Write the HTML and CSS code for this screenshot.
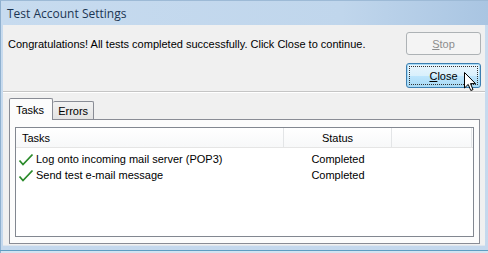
FILE: index.html
```html
<!DOCTYPE html>
<html>
<head>
<meta charset="utf-8">
<link rel="stylesheet" href="styles.css">
</head>
<body>
<div class="window">
  <div class="titlebar">Test Account Settings</div>
  <div class="client">
    <div class="top">
      <div class="message">Congratulations! All tests completed successfully. Click Close to continue.</div>
      <div class="buttons">
        <div class="btn disabled"><u>S</u>top</div>
        <div class="btn default"><span class="focus"><u>C</u>lose</span>
          <svg class="cursor" width="13" height="20" viewBox="0 0 13 20"><path d="M0.5 0.5 L0.5 16 L4.2 12.4 L6.8 18.5 L9 17.6 L6.5 11.6 L11.5 11.6 Z" fill="#fff" stroke="#000" stroke-width="1" stroke-linejoin="miter"/></svg>
        </div>
      </div>
    </div>
    <div class="separator"></div>
    <div class="tabs">
      <div class="tab active">Tasks</div>
      <div class="tab">Errors</div>
    </div>
    <div class="panel">
      <div class="list">
        <div class="header">
          <div class="col c1">Tasks</div>
          <div class="col c2">Status</div>
          <div class="col c3"></div>
        </div>
        <div class="row">
          <div class="cell c1"><svg class="check" width="16" height="13" viewBox="0 0 16 13"><path d="M1.5 7.5 L5 11.5 L14.5 1.5" fill="none" stroke="#2a8a2a" stroke-width="1.8"/></svg>Log onto incoming mail server (POP3)</div>
          <div class="cell c2">Completed</div>
        </div>
        <div class="row">
          <div class="cell c1"><svg class="check" width="16" height="13" viewBox="0 0 16 13"><path d="M1.5 7.5 L5 11.5 L14.5 1.5" fill="none" stroke="#2a8a2a" stroke-width="1.8"/></svg>Send test e-mail message</div>
          <div class="cell c2">Completed</div>
        </div>
      </div>
    </div>
  </div>
  <div class="frame-bottom"></div>
</div>
</body>
</html>
```

FILE: styles.css
```css
* { box-sizing: border-box; }
html, body { margin: 0; padding: 0; }
body {
  width: 488px;
  height: 253px;
  overflow: hidden;
  font-family: "Liberation Sans", Arial, sans-serif;
  font-size: 11px;
  color: #000;
}
.window {
  width: 488px;
  height: 253px;
  display: flex;
  flex-direction: column;
  background: linear-gradient(#c9dcef, #c4d8ed);
  border-left: 1px solid #8fb0cf;
  border-top: 1px solid #9dbad6;
}
.titlebar {
  height: 24px;
  padding-left: 6px;
  display: flex;
  align-items: center;
  font-family: "Open Sans", "Noto Sans", sans-serif;
  font-size: 12px;
  color: #1c3553;
  background: linear-gradient(90deg, #c7dbef 0%, #c0d6ec 70%, #a9c5e2 100%);
}
.client {
  margin: 0 3px 0 2px;
  height: 221px;
  background: #f0f0f0;
  border-bottom: 1px solid #dfe6ee;
  display: flex;
  flex-direction: column;
  padding: 0 4px 0 4px;
}
.frame-bottom {
  height: 7px;
  border-bottom: 2px solid #d4e3f1;
  position: relative;
}
.frame-bottom::after {
  content: "";
  position: absolute;
  left: -1px;
  right: 0;
  bottom: 0;
  height: 1px;
  background: #5f9dc2;
}
.top {
  display: flex;
  justify-content: space-between;
  height: 66px;
  padding-top: 7px;
}
.message {
  padding-top: 6px;
  padding-left: 1px;
}
.buttons {
  display: flex;
  flex-direction: column;
  gap: 8px;
  width: 75px;
}
.btn {
  position: relative;
  border-radius: 3px;
  display: flex;
  align-items: center;
  justify-content: center;
  font-size: 11px;
}
.btn.disabled {
  border: 1px solid #adb2b5;
  background: #f4f4f4;
  color: #8d8d8d;
  height: 23px;
}
.btn.default {
  height: 25px;
  border: 1px solid #3c7fb1;
  background: linear-gradient(#eaf6fd 0%, #d9f0fc 50%, #bee6fd 51%, #a7d9f5 100%);
  box-shadow: inset 0 0 0 1px #a9dbf6;
  padding: 2px;
}
.btn.default .focus {
  width: 100%;
  height: 100%;
  border: 1px dotted #333;
  display: flex;
  align-items: center;
  justify-content: center;
}
.cursor {
  position: absolute;
  left: 57px;
  top: 8px;
}
.separator {
  border-top: 1px solid #c5c5c5;
  border-bottom: 1px solid #ffffff;
  margin: 0 -4px;
}
.tabs {
  display: flex;
  align-items: flex-end;
  margin-top: 4px;
  padding-left: 2px;
  height: 22px;
  position: relative;
  z-index: 1;
}
.tab {
  height: 18px;
  padding: 0 5px;
  border: 1px solid #898c95;
  border-left: none;
  border-bottom: none;
  background: linear-gradient(#f2f2f2, #e3e3e3);
  display: flex;
  align-items: center;
  border-radius: 2px 2px 0 0;
}
.tab.active {
  padding: 0 8px 0 6px;
  border-left: 1px solid #898c95;
  background: #fcfcfc;
  margin-bottom: -1px;
  height: 22px;
}
.panel {
  margin-left: 2px;
  width: 471px;
  height: 125px;
  border: 1px solid #898c95;
  background: #fcfcfc;
  padding: 7px 5px 6px 5px;
}
.list {
  height: 110px;
  border: 1px solid #828790;
  background: #fff;
}
.header {
  display: flex;
  height: 20px;
  border-bottom: 1px solid #e5e5e5;
  background: linear-gradient(#ffffff, #f7f8f9);
}
.col {
  display: flex;
  align-items: center;
  border-right: 1px solid #e3e5e7;
}
.c1 { width: 268px; padding-left: 6px; }
.c2 { width: 108px; justify-content: center; }
.c3 { width: 80px; }
.row {
  display: flex;
  height: 16px;
}
.header + .row { margin-top: 3px; }
.cell { display: flex; align-items: center; }
.cell.c1 { padding-left: 2px; }
.check { margin-right: 2px; }
```
